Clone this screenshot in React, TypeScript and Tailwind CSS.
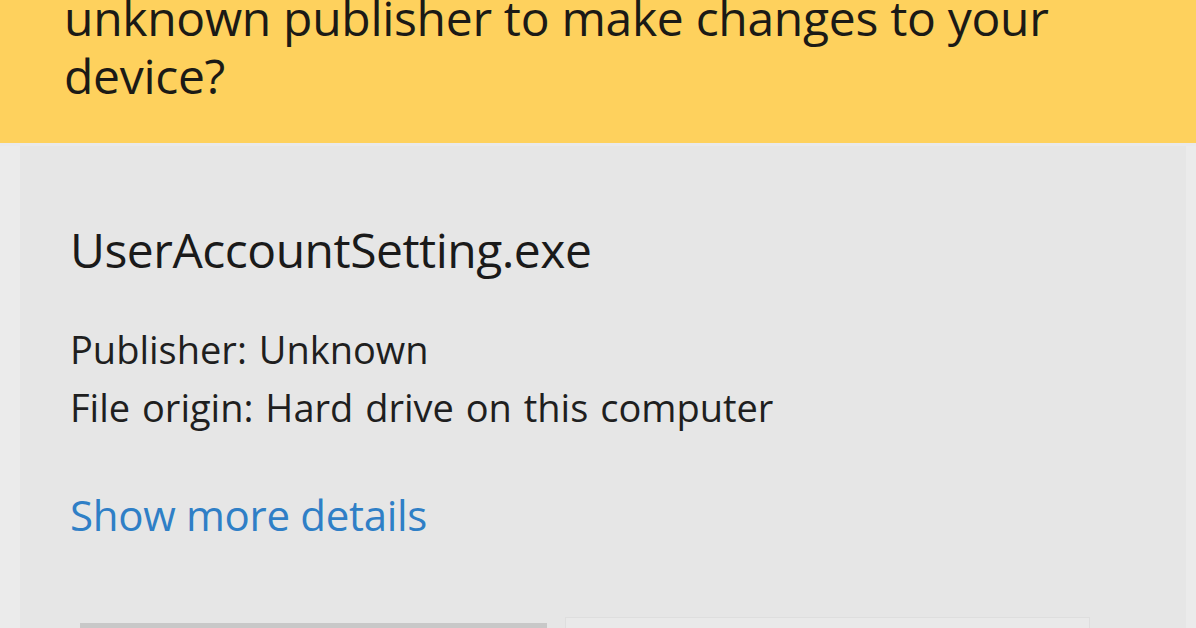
import React from 'react';

const font = { fontFamily: '"Open Sans", "Noto Sans", sans-serif' };

export default function App() {
  return (
    <div className="w-[1196px] h-[628px] overflow-hidden bg-[#e6e6e6] flex flex-col" style={font}>
      <header className="bg-[#fed15d] h-[143px] shrink-0 px-[64px] overflow-hidden">
        <h1 className="-mt-[11px] text-[48px] leading-[58px] tracking-[-0.3px] text-[#1b1a16] font-normal">
          unknown publisher to make changes to your
          <br />
          device?
        </h1>
      </header>

      <div className="flex flex-1 min-h-0 border-t-[3px] border-[#e9e9eb]">
        <div className="w-[20px] bg-[#ebebeb]" />
        <main className="flex-1 flex flex-col pl-[50px]">
          <h2 className="mt-[74px] text-[48px] leading-[60px] tracking-[-0.5px] text-[#1a1a1a]">UserAccountSetting.exe</h2>
          <div className="mt-[40px] text-[38px] leading-[58px] [word-spacing:2px] text-[#1f1f1f]">
            <p>Publisher: Unknown</p>
            <p>File origin: Hard drive on this computer</p>
          </div>
          <button className="mt-[50px] self-start text-[42px] leading-[58px] tracking-[-0.3px] text-[#2f7fc6]">
            Show more details
          </button>
          <div className="mt-auto flex items-end gap-[18px] pl-[10px] pr-[96px]">
            <div className="w-[467px] h-[5px] bg-[#c8c8c8]" />
            <div className="flex-1 h-[11px] border-t border-x border-[#dedede] bg-[#e9e9e9]" />
          </div>
        </main>
        <div className="w-[10px] bg-[#ebebeb]" />
      </div>
    </div>
  );
}
